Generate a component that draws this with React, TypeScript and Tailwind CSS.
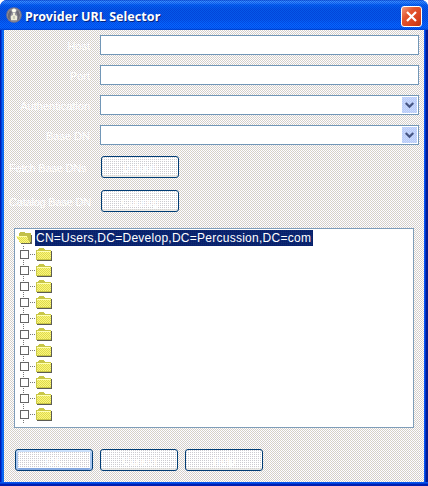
import React from "react";

const face =
  "bg-[conic-gradient(#fff_25%,#d0cad0_0_50%,#fffffa_0_75%,#d6d2ca_0)] bg-[length:2px_2px]";

function Title() {
  return (
    <header className="flex h-[30px] shrink-0 items-center bg-[conic-gradient(#0033cc88_25%,transparent_0_50%,#0033cc88_0_75%,transparent_0),linear-gradient(#0845c8_0,#3a92ff_1px,#2c86ff_3px,#0566f5_5px,#0559e8_9px,#0559ea_19px,#0566ff_24px,#0566ff_28px,#0046d0_30px)] bg-[length:2px_2px,100%_100%] bg-[position:0_5px,0_0] pl-[6px] pr-[6px] pt-px">
      <svg width="16" height="16" viewBox="0 0 16 16" className="-mt-px shrink-0">
        <circle cx="8" cy="8" r="7.8" fill="#77758a" />
        <circle cx="8" cy="8" r="6.6" fill="#99979f" />
        <path d="M4 3 2 7v4l3 3-1-4 2-5zM12 3l2 5-1 4-2 2 1-4-2-5z" fill="#6c6a76" />
        <circle cx="8" cy="3.5" r="2" fill="#fffff0" />
        <path d="M7 6h2v2l2 1v4H5V9l2-1z" fill="#eeecd8" />
        <path d="M7.5 9h1v3h-1z" fill="#aaa9a0" />
      </svg>
      <h1 className="ml-[3px] mt-[2px] w-[138px] whitespace-nowrap font-['Noto_Sans',sans-serif] text-[12.5px] font-bold leading-4 tracking-[0.04px] text-white [text-shadow:1px_1px_0_#05247f]">
        Provider URL Selector
      </h1>
      <button className="ml-auto mt-[2px] flex h-[21px] w-[21px] items-center justify-center rounded-[3px] border border-white bg-[linear-gradient(135deg,#f29b7f,#e4562f_35%,#d7401c_75%,#b93412)]">
        <svg width="13" height="13" viewBox="0 0 13 13">
          <path d="m2 2 9 9m0-9-9 9" stroke="#fff" strokeWidth="2.2" />
        </svg>
      </button>
    </header>
  );
}

function Field({ label, select }: { label: string; select?: boolean }) {
  return (
    <div className="flex h-5 items-center">
      <label className="mr-[10px] mt-px w-[86px] whitespace-nowrap text-right text-[11px] leading-4 text-white">
        {label}
      </label>
      <div className="flex h-5 w-[319px] items-center justify-end border border-[#7297b7] bg-white pr-px">
        {select && (
          <div className="flex h-4 w-[15px] items-center justify-center bg-[conic-gradient(#c4d3ff_25%,#b9c9f5_0_50%,#ccdcff_0_75%,#b7cdf5_0)] bg-[length:2px_2px]">
            <svg width="9" height="7" viewBox="0 0 9 7">
              <path d="m.7 1 3.8 3.8L8.3 1" fill="none" stroke="#465582" strokeWidth="2.2" />
            </svg>
          </div>
        )}
      </div>
    </div>
  );
}

function Button({ text, focus }: { text: string; focus?: boolean }) {
  return (
    <button
      className={
        "flex h-[22px] w-[78px] items-center justify-center rounded-[3px] border border-[#003c74] bg-[conic-gradient(#fff_75%,#cccbd0_0)] bg-[length:2px_2px] pt-px text-[11px] leading-4 text-white " +
        (focus
          ? "shadow-[inset_0_2px_0_#cae0fb,inset_2px_0_0_#a9c7f0,inset_-2px_0_0_#a9c7f0,inset_0_-2px_0_#86a9e0]"
          : "shadow-[inset_0_-2px_0_#dcd7d088]")
      }
    >
      {text}
    </button>
  );
}

function Action({ label, text }: { label: string; text: string }) {
  return (
    <div className="flex h-[22px] items-center">
      <span className="mr-[11px] mt-px w-[86px] whitespace-nowrap pl-[5px] text-left text-[11px] leading-4 tracking-[-0.2px] text-white">{label}</span>
      <Button text={text} />
    </div>
  );
}

function Folder({ open }: { open?: boolean }) {
  return (
    <svg width="17" height="16" viewBox="0 0 17 16" shapeRendering="crispEdges" className="shrink-0">
      <defs>
        <pattern id="grain" width="2" height="2" patternUnits="userSpaceOnUse">
          <path fill="#fbf97c" d="M0 0h2v2H0z" />
          <path fill="#dfd850" d="M0 0h1v1H0zM1 1h1v1H1z" />
        </pattern>
      </defs>
      {open ? (
        <>
          <path d="M4 5h12v9H5z" fill="#666652" />
          <path d="M3 3h1V2h5v1h6v9H4z" fill="#c3c04a" />
          <path d="M0 6h11l3 7H4z" fill="url(#grain)" />
          <path d="M0 6.5h11" stroke="#ffffaa" />
        </>
      ) : (
        <>
          <path d="M1 5h15v10H1z" fill="#5c5c54" />
          <path d="M0 4h2V3h1V2h5v1h1v1h6v10H0z" fill="#c9c748" />
          <path d="M1 5h14v8H1z" fill="url(#grain)" />
          <path d="M1 5.5h13" stroke="#ffffb5" />
        </>
      )}
    </svg>
  );
}

function Tree() {
  return (
    <div className="ml-[10px] mt-4 h-[200px] w-[400px] border border-[#7f9db9] bg-white pl-px pt-px">
      <div className="flex h-4">
        <Folder open />
        <span className="ml-[2px] h-4 w-[278px] whitespace-nowrap bg-[conic-gradient(#0a246a_25%,#071d70_0_50%,#0a246a_0_75%,#102c78_0)] bg-[length:2px_2px] pl-px text-[12px] leading-[17px] tracking-[0.26px] text-white">
          CN=Users,DC=Develop,DC=Percussion,DC=com
        </span>
      </div>
      <div className="ml-[7px] h-[177px] bg-[linear-gradient(#777_50%,transparent_0)] bg-[length:1px_2px] bg-repeat-y">
        {Array.from({ length: 11 }, (_, i) => (
          <div key={i} className="-ml-[3px] flex h-4 items-center">
            <span className="mt-px h-[9px] w-[9px] border border-[#666] bg-white" />
            <span className="ml-px mr-px h-px w-[5px] bg-[linear-gradient(90deg,#777_50%,transparent_0)] bg-[length:2px_1px]" />
            <Folder />
          </div>
        ))}
      </div>
    </div>
  );
}

export default function App() {
  return (
    <div className="h-[486px] w-[428px] bg-white">
      <main className="flex h-full flex-col overflow-hidden rounded-t-[7px] bg-[#0831d9] font-['Liberation_Sans',Arial,sans-serif]">
        <Title />
        <div className="flex-1 bg-[linear-gradient(90deg,#001eb0_0_1px,#003de0_1px_2px,#0866f0_2px_4px,#0054e3_4px_424px,#0855ef_424px_425px,#0035c8_425px_426px,#001b99_426px)] pl-1 pr-1">
          <div className={"h-[452px] pt-[5px] " + face}>
            <section className="flex flex-col gap-[10px]">
              <Field label="Host" />
              <Field label="Port" />
              <Field label="Authentication" select />
              <Field label="Base DN" select />
            </section>
            <section className="mt-[11px] flex flex-col gap-3">
              <Action label="Fetch Base DNs" text="Default" />
              <Action label="Catalog Base DN" text="Catalog" />
            </section>
            <Tree />
            <footer className="ml-[11px] mt-[21px] flex gap-[7px]">
              <Button text="OK" focus />
              <Button text="Cancel" />
              <Button text="Help" />
            </footer>
          </div>
        </div>
        <div className="-mt-1 h-1 shrink-0 bg-[linear-gradient(#0755ed_0_1px,#0040d8_1px_2px,#001eb0_2px)]" />
      </main>
    </div>
  );
}
